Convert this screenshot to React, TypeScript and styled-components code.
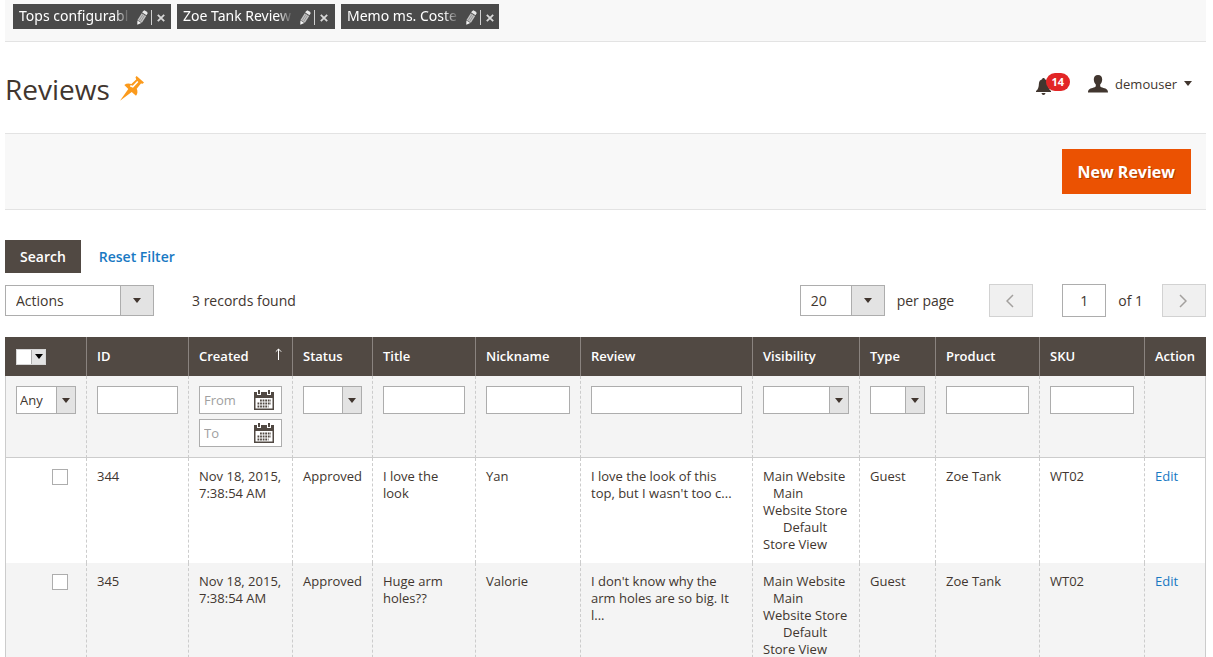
import React from 'react';
import styled, { createGlobalStyle } from 'styled-components';

const GlobalStyle = createGlobalStyle`
  *, *::before, *::after { box-sizing: border-box; }
  body {
    margin: 0;
    background: #fff;
    color: #41362f;
    font-family: 'Open Sans', 'Noto Sans', sans-serif;
    font-size: 14px;
    line-height: 20px;
  }
  button, input, select { font: inherit; color: inherit; margin: 0; }
`;

const Page = styled.div`
  padding: 0 7px 0 5px;
`;

const TabBar = styled.nav`
  display: flex;
  gap: 6px;
  height: 42px;
  padding: 4px 8px;
  background: #f8f8f8;
  border-bottom: 1px solid #e3e3e3;
`;

const Tab = styled.div`
  display: flex;
  align-items: center;
  width: 158px;
  height: 25px;
  padding: 0 6px 2px;
  background: #4a4a4a;
  color: #fff;
`;

const TabLink = styled.a`
  flex: 1;
  white-space: nowrap;
  color: #fff;
  text-decoration: none;
  font-family: 'Noto Sans', 'Open Sans', sans-serif;
  mask-image: linear-gradient(to right, #000 88%, transparent 102%);
`;

const TabButton = styled.button<{ $divided?: boolean }>`
  display: flex;
  align-items: center;
  justify-content: center;
  width: ${(p) => (p.$divided ? 19 : 17)}px;
  height: 15px;
  padding: 0;
  border: 0;
  border-left: ${(p) => (p.$divided ? '1px solid #d0d0d0' : '0')};
  background: none;
  cursor: pointer;
`;

const TabActions = styled.div`
  display: flex;
  align-items: center;
  flex: none;
  margin: 4px -4px 0 6px;
`;

const PageHeader = styled.header`
  display: flex;
  align-items: center;
  justify-content: space-between;
  height: 91px;
  padding-right: 14px;
`;

const TitleGroup = styled.div`
  display: flex;
  align-items: center;
  gap: 10px;
  padding-top: 2px;
`;

const Title = styled.h1`
  margin: 0;
  font-size: 28px;
  font-weight: 400;
  line-height: 40px;
`;

const UserTools = styled.div`
  display: flex;
  align-items: center;
  gap: 18px;
  padding-bottom: 8px;
`;

const Notifications = styled.button`
  display: flex;
  align-items: center;
  height: 22px;
  padding: 0;
  border: 0;
  background: none;
  cursor: pointer;

  svg { margin-top: 6px; }
`;

const Badge = styled.span`
  height: 18px;
  margin: -4px 0 0 -5px;
  padding: 0 6px;
  border-radius: 9px;
  background: #e22626;
  color: #fff;
  font-size: 11px;
  font-weight: 700;
  line-height: 18px;
`;

const AccountButton = styled.button`
  display: flex;
  align-items: center;
  gap: 7px;
  padding: 0;
  border: 0;
  background: none;
  font-size: 13px;
  cursor: pointer;
`;

const ActionBar = styled.div`
  display: flex;
  justify-content: flex-end;
  padding: 15px;
  background: #f8f8f8;
  border-top: 1px solid #e3e3e3;
  border-bottom: 1px solid #e3e3e3;
`;

const PrimaryButton = styled.button`
  height: 45px;
  padding: 0 16px;
  border: 0;
  background: #eb5202;
  color: #fff;
  font-size: 16px;
  font-weight: 700;
  text-shadow: 1px 1px 0 rgba(0, 0, 0, 0.25);
  cursor: pointer;
`;

const FilterActions = styled.div`
  display: flex;
  align-items: center;
  gap: 18px;
  margin-top: 30px;
`;

const SearchButton = styled.button`
  height: 33px;
  padding: 0 15px;
  border: 0;
  background: #514943;
  color: #fff;
  font-weight: 600;
  cursor: pointer;
`;

const TextButton = styled.button`
  padding: 0;
  border: 0;
  background: none;
  color: #1979c3;
  font-weight: 600;
  cursor: pointer;
`;

const Toolbar = styled.div`
  display: flex;
  align-items: center;
  justify-content: space-between;
  margin: 11px 0 20px;
  height: 33px;
`;

const ToolbarGroup = styled.div<{ $gap: number }>`
  display: flex;
  align-items: center;
  gap: ${(p) => p.$gap}px;
`;

const SelectBox = styled.div<{ $width?: number; $height: number; $arrow: number }>`
  display: grid;
  grid-template-columns: minmax(0, 1fr) ${(p) => p.$arrow}px;
  grid-template-rows: minmax(0, 1fr);
  width: ${(p) => (p.$width ? `${p.$width}px` : '100%')};
  height: ${(p) => p.$height}px;
  border: 1px solid #adadad;
  background: #fff;

  select {
    grid-area: 1 / 1 / 2 / 3;
    width: 100%;
    min-width: 0;
    padding: 0 0 0 ${(p) => (p.$height > 30 ? 10 : 3)}px;
    border: 0;
    border-radius: 0;
    background: none;
    appearance: none;
  }
`;

const ArrowCell = styled.span`
  grid-area: 1 / 2 / 2 / 3;
  display: flex;
  align-items: center;
  justify-content: center;
  border-left: 1px solid #adadad;
  background: #e3e3e3;
  pointer-events: none;
`;

const MassSelect = styled(SelectBox)`
  border-color: #d6d6d6;
  color: #000;
`;

const PageButton = styled.button`
  display: flex;
  align-items: center;
  justify-content: center;
  width: 44px;
  height: 33px;
  padding: 0 2px 0 0;
  border: 1px solid #d2d2d2;
  background: #f0f0f0;
`;

const PageInput = styled.input`
  width: 44px;
  height: 33px;
  padding: 0;
  border: 1px solid #adadad;
  background: #fff;
  text-align: center;
`;

const Grid = styled.table`
  width: 100%;
  table-layout: fixed;
  border-collapse: separate;
  border-spacing: 0;
  font-size: 13px;
  line-height: 17px;
  text-align: left;
`;

const HeadCell = styled.th`
  height: 39px;
  padding: 0 10px;
  border-right: 1px solid #8a837f;
  background: #514943;
  color: #fff;
  font-weight: 600;
  vertical-align: middle;

  &:first-child { border-left: 1px solid #514943; }
  &:last-child { border-right-color: #514943; }
`;

const SortLabel = styled.span`
  display: flex;
  align-items: flex-start;
  justify-content: space-between;
`;

const Cell = styled.td`
  padding: 10px;
  border-right: 1px dashed #cccccc;
  color: #41362f;
  vertical-align: top;

  &:first-child { border-left: 1px solid #cccccc; }
  &:last-child { border-right: 1px solid #cccccc; }
`;

const FilterCell = styled(Cell)`
  border-bottom: 1px solid #cccccc;
  background: #f4f4f4;
`;

const Row = styled.tr<{ $shaded: boolean }>`
  background: ${(p) => (p.$shaded ? '#f4f4f4' : '#fff')};
`;

const FilterInput = styled.input`
  display: block;
  width: 100%;
  height: 28px;
  padding: 0 4px;
  border: 1px solid #adadad;
  background: #fff;
`;

const DateStack = styled.div`
  display: grid;
  grid-template-columns: minmax(0, 1fr);
  gap: 5px;
`;

const DateField = styled.div`
  display: flex;
  align-items: center;
  height: 28px;
  padding: 0 7px 0 4px;
  border: 1px solid #adadad;
  background: #fff;

  input {
    flex: 1;
    min-width: 0;
    padding: 0;
    border: 0;
    background: none;
    outline: 0;
  }
  input::placeholder { color: #a0a0a0; opacity: 1; }

  button {
    display: flex;
    flex: none;
    padding: 0;
    border: 0;
    background: none;
    cursor: pointer;
  }
`;

const CheckWrap = styled.div`
  display: flex;
  justify-content: flex-end;
  padding: 1px 8px 0 0;
`;

const Checkbox = styled.input`
  width: 16px;
  height: 16px;
  border: 1px solid #adadad;
  background: #fff;
  appearance: none;

  &:checked { background: #514943; }
`;

const EditLink = styled.a`
  color: #1979c3;
  text-decoration: none;
`;

const StoreLine = styled.div<{ $level: number }>`
  text-indent: ${(p) => p.$level * 10}px;
`;

const Caret = ({ width = 8, height = 5 }: { width?: number; height?: number }) => (
  <svg width={width} height={height} viewBox="0 0 8 5" aria-hidden="true">
    <path d="M0 0h8L4 5z" fill="currentColor" />
  </svg>
);

const PencilIcon = () => (
  <svg width="11" height="15" viewBox="0 0 11 15" aria-hidden="true">
    <path d="M6 1.300 7.400.3l2.900 1.700.2 1.600-1 1.700-4.300-2.700z" fill="#e8e8e8" />
    <path d="M4.700 3.200 9.200 6 4.900 12.700.5 10z" fill="#c4c4c4" />
    <path d="M6.100 4.200 2.100 10.600M7.600 5.200l-4 6.400" stroke="#747474" strokeWidth=".6" />
    <path d="m.4 10.600 3.900 2.500-4 1.600z" fill="#f5f5f5" />
  </svg>
);

const CloseIcon = () => (
  <svg width="8" height="8" viewBox="0 0 8 8" aria-hidden="true">
    <path d="m.8.8 6.400 6.400M7.200.8.8 7.200" stroke="#d8d8d8" strokeWidth="1.800" />
  </svg>
);

const PinIcon = () => (
  <svg width="24" height="25" viewBox="0 0 24 25" aria-hidden="true">
    <path
      d="M16.600 0 24 6.600l-1.300 1.200-1.700-.2-4.300 5.200c1.200 2.400 1 5-.7 7L11.700 16 0 24.800 8.300 13.100 4.300 8.900c2.200-1.500 4.600-1.700 7.100-.8l4.800-4.500-.7-2.300z"
      fill="#fb9a1c"
    />
    <path d="m10.300 9.700 2.500 1.100 5-5.300" fill="none" stroke="#fff" strokeWidth="1.600" />
  </svg>
);

const BellIcon = () => (
  <svg width="15" height="17" viewBox="0 0 15 17" aria-hidden="true">
    <path
      d="M7.500 0c.8 0 1.400.6 1.400 1.300 2 .6 3.100 2.200 3.200 4.500.1 3.500.8 5.500 2.900 7.300v1H0v-1c2.100-1.800 2.800-3.800 2.900-7.300.1-2.300 1.200-3.900 3.200-4.500C6.100.6 6.700 0 7.500 0zM5.500 15h4c-.2 1.200-1 1.900-2 1.900S5.700 16.200 5.500 15z"
      fill="#41362f"
    />
  </svg>
);

const UserIcon = () => (
  <svg width="20" height="18" viewBox="0 0 20 18" aria-hidden="true">
    <path
      d="M10 0c2.800 0 4.300 1.800 4.200 4.600-.1 2.200-.9 3.900-2 5v1.600c.4.800 1.500 1.200 3.300 1.700 3 .8 4.500 1.500 4.500 4.600H0c0-3.100 1.500-3.800 4.500-4.600 1.800-.5 2.900-.9 3.300-1.700V9.600c-1.100-1.100-1.900-2.800-2-5C5.700 1.800 7.200 0 10 0z"
      fill="#41362f"
    />
  </svg>
);

const ChevronIcon = ({ next }: { next?: boolean }) => (
  <svg width="8" height="14" viewBox="0 0 8 14" aria-hidden="true">
    <path
      d={next ? 'm1 1 6 6-6 6' : 'M7 1 1 7l6 6'}
      fill="none"
      stroke="#a3a09e"
      strokeWidth="1.500"
    />
  </svg>
);

const SortIcon = () => (
  <svg width="7" height="12" viewBox="0 0 7 12" aria-hidden="true">
    <path d="M3.500 12V1M.8 3.700 3.500 1l2.700 2.700" fill="none" stroke="#fff" strokeWidth="1" />
  </svg>
);

const CalendarIcon = () => (
  <svg width="20" height="20" viewBox="0 0 20 20" aria-hidden="true">
    <path d="M0 2h20v18H0z" fill="#514943" />
    <path d="M1.500 8h17v10.500h-17z" fill="#fff" />
    <path d="M3 0h4v5H3zM13 0h4v5h-4z" fill="#fff" />
    <path d="M4 0h2v4H4zM14 0h2v4h-2z" fill="#514943" />
    <path
      d="M6 10.500h11M3.500 13.500h13.500M3.500 16.500h11"
      stroke="#514943"
      strokeWidth="1.800"
      strokeDasharray="1.800 .8"
    />
  </svg>
);

interface SelectProps {
  label: string;
  options: string[];
  width?: number;
  height?: number;
  arrow?: number;
}

const Select = ({ label, options, width, height = 28, arrow = 19 }: SelectProps) => (
  <SelectBox $width={width} $height={height} $arrow={arrow}>
    <ArrowCell>
      <Caret />
    </ArrowCell>
    <select aria-label={label}>
      {options.map((option) => (
        <option key={option}>{option}</option>
      ))}
    </select>
  </SelectBox>
);

const tabs = ['Tops configurabl', 'Zoe Tank Review', 'Memo ms. Coste'];
const columnWidths = [82, 102, 104, 80, 103, 105, 172, 107, 76, 104, 105, 61];

const reviews = [
  {
    id: 344,
    created: 'Nov 18, 2015, 7:38:54 AM',
    status: 'Approved',
    title: 'I love the look',
    nickname: 'Yan',
    review: "I love the look of this top, but I wasn't too c...",
    type: 'Guest',
    product: 'Zoe Tank',
    sku: 'WT02',
  },
  {
    id: 345,
    created: 'Nov 18, 2015, 7:38:54 AM',
    status: 'Approved',
    title: 'Huge arm holes??',
    nickname: 'Valorie',
    review: "I don't know why the arm holes are so big. It l...",
    type: 'Guest',
    product: 'Zoe Tank',
    sku: 'WT02',
  },
];

export default function App() {
  return (
    <>
      <GlobalStyle />
      <Page>
        <TabBar aria-label="Bookmarks">
          {tabs.map((tab) => (
            <Tab key={tab}>
              <TabLink href="#">{tab}</TabLink>
              <TabActions>
                <TabButton type="button" aria-label="Rename bookmark">
                  <PencilIcon />
                </TabButton>
                <TabButton type="button" aria-label="Remove bookmark" $divided>
                  <CloseIcon />
                </TabButton>
              </TabActions>
            </Tab>
          ))}
        </TabBar>

        <PageHeader>
          <TitleGroup>
            <Title>Reviews</Title>
            <PinIcon />
          </TitleGroup>
          <UserTools>
            <Notifications type="button" aria-label="Notifications">
              <BellIcon />
              <Badge>14</Badge>
            </Notifications>
            <AccountButton type="button">
              <UserIcon />
              <span>demouser</span>
              <Caret />
            </AccountButton>
          </UserTools>
        </PageHeader>

        <ActionBar>
          <PrimaryButton type="button">New Review</PrimaryButton>
        </ActionBar>

        <main>
          <FilterActions>
            <SearchButton type="button">Search</SearchButton>
            <TextButton type="button">Reset Filter</TextButton>
          </FilterActions>

          <Toolbar>
            <ToolbarGroup $gap={38}>
              <Select label="Actions" options={['Actions']} width={149} height={31} arrow={33} />
              <span>3 records found</span>
            </ToolbarGroup>
            <ToolbarGroup $gap={35}>
              <ToolbarGroup $gap={12}>
                <Select label="Records per page" options={['20']} width={85} height={31} arrow={33} />
                <span>per page</span>
              </ToolbarGroup>
              <ToolbarGroup $gap={29}>
                <PageButton type="button" aria-label="Previous page" disabled>
                  <ChevronIcon />
                </PageButton>
                <ToolbarGroup $gap={12}>
                  <PageInput aria-label="Current page" defaultValue="1" />
                  <ToolbarGroup $gap={19}>
                    <span>of 1</span>
                    <PageButton type="button" aria-label="Next page" disabled>
                      <ChevronIcon next />
                    </PageButton>
                  </ToolbarGroup>
                </ToolbarGroup>
              </ToolbarGroup>
            </ToolbarGroup>
          </Toolbar>

          <Grid>
            <colgroup>
              {columnWidths.map((width, index) => (
                <col key={index} width={width} />
              ))}
            </colgroup>
            <thead>
              <tr>
                <HeadCell>
                  <MassSelect $width={30} $height={16} $arrow={14}>
                    <ArrowCell>
                      <Caret />
                    </ArrowCell>
                    <select aria-label="Select records">
                      <option aria-label="None" />
                    </select>
                  </MassSelect>
                </HeadCell>
                <HeadCell>ID</HeadCell>
                <HeadCell>
                  <SortLabel>
                    Created
                    <SortIcon />
                  </SortLabel>
                </HeadCell>
                <HeadCell>Status</HeadCell>
                <HeadCell>Title</HeadCell>
                <HeadCell>Nickname</HeadCell>
                <HeadCell>Review</HeadCell>
                <HeadCell>Visibility</HeadCell>
                <HeadCell>Type</HeadCell>
                <HeadCell>Product</HeadCell>
                <HeadCell>SKU</HeadCell>
                <HeadCell>Action</HeadCell>
              </tr>
            </thead>
            <tbody>
              <tr>
                <FilterCell>
                  <Select label="Selected" options={['Any']} />
                </FilterCell>
                <FilterCell>
                  <FilterInput aria-label="ID" />
                </FilterCell>
                <FilterCell>
                  <DateStack>
                    {['From', 'To'].map((bound) => (
                      <DateField key={bound}>
                        <input aria-label={`Created ${bound}`} placeholder={bound} />
                        <button type="button" aria-label={`Pick ${bound} date`}>
                          <CalendarIcon />
                        </button>
                      </DateField>
                    ))}
                  </DateStack>
                </FilterCell>
                <FilterCell>
                  <Select label="Status" options={['']} />
                </FilterCell>
                <FilterCell>
                  <FilterInput aria-label="Title" />
                </FilterCell>
                <FilterCell>
                  <FilterInput aria-label="Nickname" />
                </FilterCell>
                <FilterCell>
                  <FilterInput aria-label="Review" />
                </FilterCell>
                <FilterCell>
                  <Select label="Visibility" options={['']} />
                </FilterCell>
                <FilterCell>
                  <Select label="Type" options={['']} />
                </FilterCell>
                <FilterCell>
                  <FilterInput aria-label="Product" />
                </FilterCell>
                <FilterCell>
                  <FilterInput aria-label="SKU" />
                </FilterCell>
                <FilterCell />
              </tr>
              {reviews.map((item, index) => (
                <Row key={item.id} $shaded={index % 2 === 1}>
                  <Cell>
                    <CheckWrap>
                      <Checkbox type="checkbox" aria-label={`Select review ${item.id}`} />
                    </CheckWrap>
                  </Cell>
                  <Cell>{item.id}</Cell>
                  <Cell>{item.created}</Cell>
                  <Cell>{item.status}</Cell>
                  <Cell>{item.title}</Cell>
                  <Cell>{item.nickname}</Cell>
                  <Cell>{item.review}</Cell>
                  <Cell>
                    <StoreLine $level={0}>Main Website</StoreLine>
                    <StoreLine $level={1}>Main Website Store</StoreLine>
                    <StoreLine $level={2}>Default Store View</StoreLine>
                  </Cell>
                  <Cell>{item.type}</Cell>
                  <Cell>{item.product}</Cell>
                  <Cell>{item.sku}</Cell>
                  <Cell>
                    <EditLink href="#">Edit</EditLink>
                  </Cell>
                </Row>
              ))}
            </tbody>
          </Grid>
        </main>
      </Page>
    </>
  );
}
